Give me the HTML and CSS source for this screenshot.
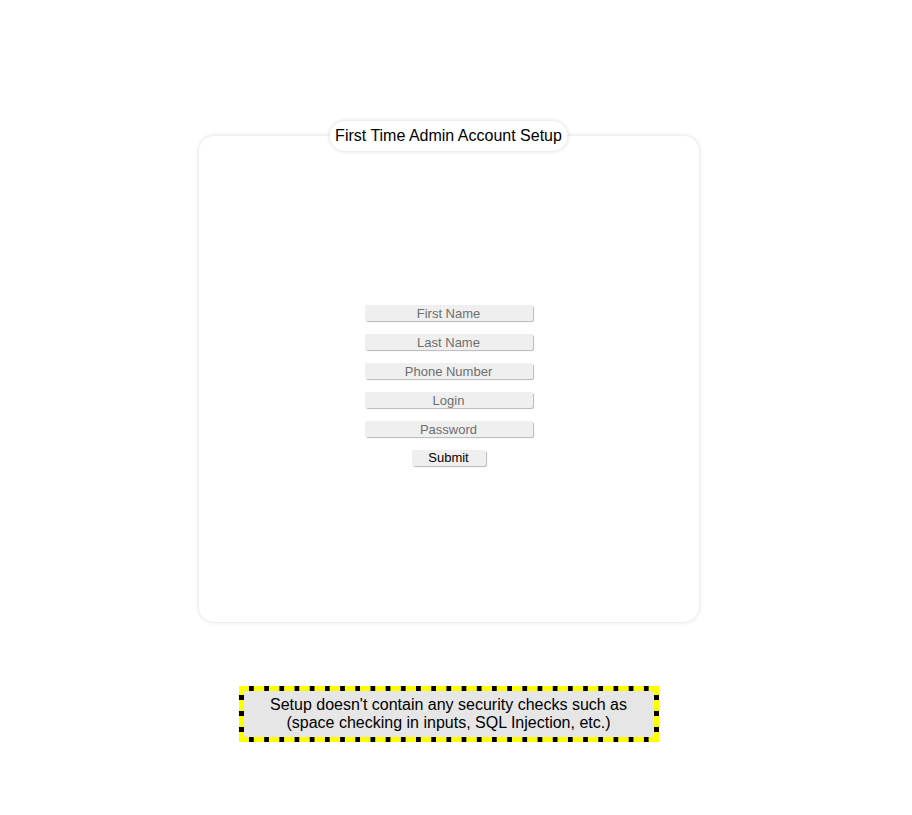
FILE: index.html
```html
<!DOCTYPE html>
<html>
<head>
<meta charset="utf-8">
<title>First Time Admin Account Setup</title>
<link rel="stylesheet" href="styles.css">
</head>
<body>
<div class="page">
  <div class="card">
    <div class="title">First Time Admin Account Setup</div>
    <form class="form">
      <input class="field" type="text" placeholder="First Name">
      <input class="field" type="text" placeholder="Last Name">
      <input class="field" type="text" placeholder="Phone Number">
      <input class="field" type="text" placeholder="Login">
      <input class="field" type="password" placeholder="Password">
      <button class="submit" type="button">Submit</button>
    </form>
  </div>
  <div class="notice">Setup doesn't contain any security checks such as<br>(space checking in inputs, SQL Injection, etc.)</div>
</div>
</body>
</html>
```

FILE: styles.css
```css
html, body {
  margin: 0;
  padding: 0;
  background: #fff;
}
body {
  font-family: "Liberation Sans", Arial, sans-serif;
  color: #000;
}
.page {
  width: 897px;
  display: flex;
  flex-direction: column;
  align-items: center;
  padding-top: 136px;
}
.card {
  position: relative;
  box-sizing: border-box;
  width: 500px;
  height: 486px;
  border-radius: 15px;
  background: #fff;
  box-shadow: 0 0 4px rgba(0, 0, 0, 0.16);
  padding-top: 169px;
}
.title {
  position: absolute;
  top: -15px;
  left: 50%;
  transform: translateX(-50%);
  height: 30px;
  line-height: 30px;
  padding: 0 6px;
  border-radius: 15px;
  background: #fff;
  box-shadow: 0 0 4px rgba(0, 0, 0, 0.16);
  font-size: 16px;
  white-space: nowrap;
}
.form {
  display: flex;
  flex-direction: column;
  align-items: center;
  gap: 13px;
}
.field, .submit {
  box-sizing: border-box;
  height: 16px;
  margin: 0;
  padding: 0;
  border: none;
  border-radius: 2px;
  background: #efefef;
  box-shadow: 1px 1px 1px rgba(0, 0, 0, 0.28);
  font-family: "Liberation Sans", Arial, sans-serif;
  font-size: 13px;
  text-align: center;
  outline: none;
}
.field {
  width: 168px;
  color: #000;
}
.field::placeholder {
  color: #6e6e6e;
}
.submit {
  width: 74px;
  color: #000;
  line-height: 16px;
}
.notice {
  box-sizing: border-box;
  margin-top: 64px;
  width: 420px;
  height: 56px;
  border: 5px solid transparent;
  background:
    linear-gradient(#e6e6e6, #e6e6e6) padding-box,
    linear-gradient(90deg, #000 5px, transparent 5px) 10px 0 / 15.2px 5px repeat-x border-box,
    linear-gradient(90deg, #000 5px, transparent 5px) 10px 100% / 15.2px 5px repeat-x border-box,
    linear-gradient(#000 5px, transparent 5px) 0 9px / 5px 16px repeat-y border-box,
    linear-gradient(#000 5px, transparent 5px) 100% 9px / 5px 16px repeat-y border-box,
    #ffff00;
  font-size: 16px;
  line-height: 18px;
  text-align: center;
  padding-top: 5px;
}
```
